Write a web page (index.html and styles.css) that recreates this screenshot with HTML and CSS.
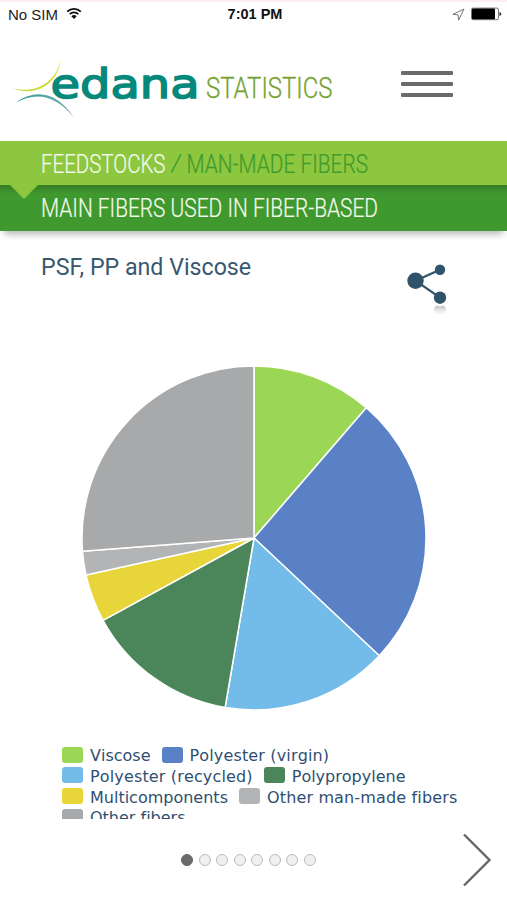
FILE: index.html
```html
<!DOCTYPE html>
<html lang="en">
<head>
    <meta charset="UTF-8">
    <meta name="viewport" content="width=device-width, initial-scale=1.0">
    <title>edana Statistics</title>
    <link rel="stylesheet" href="styles.css">
</head>
<body>

<div class="status-bar">
    <div class="carrier">
        <span>No SIM</span>
        <svg class="wifi" width="16" height="13" viewBox="0 0 16 13">
            <path d="M1.2 4.6a9.7 9.7 0 0 1 13.6 0M3.7 7.2a6.1 6.1 0 0 1 8.6 0" fill="none" stroke="#111" stroke-width="1.8"/>
            <path d="M8 12L5.3 9.2a3.9 3.9 0 0 1 5.4 0z" fill="#111"/>
        </svg>
    </div>
    <span class="time">7:01 PM</span>
    <div class="indicators">
        <svg width="13" height="13" viewBox="0 0 13 13">
            <path d="M12 1L.9 6.3l5.2.6.5 5.2z" fill="none" stroke="#777" stroke-width="1"/>
        </svg>
        <svg width="31" height="14" viewBox="0 0 31 14">
            <rect x=".5" y="1.1" width="27" height="11.6" rx="1.5" fill="#fff" stroke="#777"/>
            <rect x="1" y="1.6" width="23" height="10.6" rx="1" fill="#000"/>
            <path d="M28.5 5v4q1.8-.6 1.8-2t-1.8-2z" fill="#222"/>
        </svg>
    </div>
</div>

<header class="header">
    <svg class="logo" width="340" height="70" viewBox="0 0 340 70">
        <defs>
            <linearGradient id="yellow" x1="0" x2="1">
                <stop offset="0" stop-color="#c3d83a"/>
                <stop offset="1" stop-color="#d3df35"/>
            </linearGradient>
            <linearGradient id="teal" x1="0" x2="1">
                <stop offset="0" stop-color="#2d9b93"/>
                <stop offset="1" stop-color="#7db0b4"/>
            </linearGradient>
        </defs>
        <path d="M12 38.3C36 44 55 33 61 10C57 36 34 47 12 38.3z" fill="url(#yellow)"/>
        <path d="M16 52.5C37 37 59 44 73.5 67C56 46 37 41 16 52.5z" fill="url(#teal)"/>
        <text class="logo-name" x="50.5" y="47.5" textLength="149" lengthAdjust="spacingAndGlyphs">edana</text>
        <text class="logo-suffix" x="206" y="47.5" textLength="126.5" lengthAdjust="spacingAndGlyphs">STATISTICS</text>
    </svg>
    <div class="menu-button">
        <span></span>
        <span></span>
        <span></span>
    </div>
</header>

<nav class="breadcrumb">
    <svg width="507" height="44" viewBox="0 0 507 44">
        <text class="crumb" x="41" y="31.5" textLength="124.5" lengthAdjust="spacingAndGlyphs">FEEDSTOCKS</text>
        <path d="M171.5 31.5L181 13" stroke="#409a2d" stroke-width="1.5"/>
        <text class="crumb current" x="186.5" y="31.5" textLength="181.5" lengthAdjust="spacingAndGlyphs">MAN-MADE FIBERS</text>
    </svg>
</nav>
<div class="section-title">
    <svg width="507" height="45" viewBox="0 0 507 45">
        <text class="crumb" x="41" y="31.5" textLength="337" lengthAdjust="spacingAndGlyphs">MAIN FIBERS USED IN FIBER-BASED</text>
    </svg>
</div>

<main>
    <div class="chart-head">
        <h1>PSF, PP and Viscose</h1>
        <svg class="share" width="42" height="56" viewBox="0 0 42 56">
            <defs>
                <linearGradient id="fade" x1="0" y1="0" x2="0" y2="1">
                    <stop offset="0" stop-color="#999" stop-opacity=".65"/>
                    <stop offset="1" stop-color="#ccc" stop-opacity="0"/>
                </linearGradient>
            </defs>
            <path d="M34 9.7L9.5 20.7L34 37.7" fill="none" stroke="#31526b" stroke-width="2.2"/>
            <circle cx="9.5" cy="20.7" r="8.2" fill="#31526b"/>
            <circle cx="34" cy="9.7" r="5.2" fill="#31526b"/>
            <circle cx="34" cy="37.7" r="6.2" fill="#31526b"/>
            <path d="M27.8 50a6.2 5.5 0 0 1 2.5-4.5q3.7 1.5 7.4 0a6.2 5.5 0 0 1 2.5 4.5l-1.5 5h-9z" fill="url(#fade)"/>
        </svg>
    </div>

    <svg class="pie" width="346" height="346" viewBox="-173 -173 346 346">
        <path fill="#9bd755" d="M0 0L0 -172A172 172 0 0 1 112.3 -130.3z"/>
        <path fill="#5a81c6" d="M0 0L112.3 -130.3A172 172 0 0 1 125.3 117.8z"/>
        <path fill="#73bbe9" d="M0 0L125.3 117.8A172 172 0 0 1 -28.9 169.6z"/>
        <path fill="#4b865a" d="M0 0L-28.9 169.6A172 172 0 0 1 -151 82.3z"/>
        <path fill="#e8d53a" d="M0 0L-151 82.3A172 172 0 0 1 -168 37z"/>
        <path fill="#b2b4b6" d="M0 0L-168 37A172 172 0 0 1 -171.5 13.3z"/>
        <path fill="#a7a9ab" d="M0 0L-171.5 13.3A172 172 0 0 1 0 -172z"/>
    </svg>

    <div class="legend">
        <div class="legend-row">
            <span class="item"><i class="swatch viscose"></i>Viscose</span>
            <span class="item wide"><i class="swatch virgin"></i>Polyester (virgin)</span>
        </div>
        <div class="legend-row">
            <span class="item wide"><i class="swatch recycled"></i>Polyester (recycled)</span>
            <span class="item"><i class="swatch polypropylene"></i>Polypropylene</span>
        </div>
        <div class="legend-row">
            <span class="item"><i class="swatch multi"></i>Multicomponents</span>
            <span class="item wide"><i class="swatch man-made"></i>Other man-made fibers</span>
        </div>
        <div class="legend-row">
            <span class="item"><i class="swatch other"></i>Other fibers</span>
        </div>
    </div>
</main>

<footer class="pager">
    <div class="dots">
        <span class="dot active"></span>
        <span class="dot"></span>
        <span class="dot"></span>
        <span class="dot"></span>
        <span class="dot"></span>
        <span class="dot"></span>
        <span class="dot"></span>
        <span class="dot"></span>
    </div>
    <svg class="next" width="30" height="56" viewBox="0 0 30 56">
        <path d="M2 2.5L27.5 28L2 53.5" fill="none" stroke="#666" stroke-width="2.4"/>
    </svg>
</footer>

</body>
</html>
```

FILE: styles.css
```css
* {
    box-sizing: border-box;
}
body {
    margin: 0;
    height: 900px;
    overflow: hidden;
    background-color: #fff;
    font-family: Roboto, Arial, sans-serif;
}
svg {
    display: block;
}

/* status bar */
.status-bar {
    display: grid;
    grid-template-columns: 1fr auto 1fr;
    align-items: center;
    height: 28px;
    padding: 0 5px 2px 8px;
    border-top: 2px solid #fdeef0;
    font-family: "Liberation Sans", Arial, sans-serif;
    font-size: 15px;
    color: #222;
}
.carrier {
    display: flex;
    align-items: center;
    gap: 8px;
}
.wifi {
    margin-bottom: 1px;
}
.time {
    font-size: 14.5px;
    font-weight: bold;
    color: #111;
}
.indicators {
    display: flex;
    justify-content: flex-end;
    align-items: center;
    gap: 6px;
}

/* header */
.header {
    display: flex;
    height: 113px;
    padding-top: 22px;
}
.logo {
    overflow: visible;
}
.logo-name {
    font-family: "DejaVu Sans", sans-serif;
    font-size: 40px;
    fill: #06897b;
    stroke: #06897b;
    stroke-width: 1.5px;
}
.logo-suffix {
    font-family: Roboto, sans-serif;
    font-size: 29px;
    font-weight: 300;
    fill: #78a22f;
    stroke: #78a22f;
    stroke-width: 0.3px;
}
.menu-button {
    display: flex;
    flex-direction: column;
    gap: 7px;
    width: 52px;
    margin: 21px 0 0 61px;
}
.menu-button span {
    height: 4px;
    border-radius: 1px;
    background-color: #6b6b6b;
}

/* green bars */
.breadcrumb {
    position: relative;
    height: 44px;
    background-color: #8dc63f;
    z-index: 1;
}
.breadcrumb::after {
    content: "";
    position: absolute;
    top: 100%;
    left: 10px;
    border: 14px solid transparent;
    border-top-color: #8dc63f;
    border-bottom: 0;
}
.section-title {
    height: 46px;
    background: linear-gradient(#347d25, #40992f 9px);
    box-shadow: 0 7px 7px -4px rgba(0, 0, 0, 0.3);
}
.crumb {
    font-family: Roboto, sans-serif;
    font-size: 25px;
    font-weight: 300;
    fill: #f4faec;
    stroke: #f4faec;
    stroke-width: 0.2px;
}
.crumb.current {
    fill: #409a2d;
    stroke: #409a2d;
}

/* chart */
.chart-head {
    display: flex;
    justify-content: space-between;
    height: 134px;
    padding: 22px 59px 0 41px;
}
.chart-head h1 {
    margin: 0;
    font-size: 23.2px;
    font-weight: 400;
    line-height: 28px;
    color: #38586f;
}
.share {
    margin-top: 7px;
}
.pie {
    margin: 0 0 0 81px;
}
.pie path {
    stroke: #fff;
    stroke-width: 1.5px;
    stroke-linejoin: round;
}
.legend {
    height: 73px;
    margin: 35px 0 0 62px;
    overflow: hidden;
    font-family: "DejaVu Sans", Verdana, sans-serif;
    font-size: 16px;
    font-kerning: none;
    font-variant-ligatures: none;
    color: #2f4f72;
}
.legend-row {
    display: flex;
    gap: 11px;
    height: 20.8px;
}
.item {
    display: flex;
    gap: 7px;
    line-height: 20px;
    white-space: nowrap;
}
.item.wide {
    letter-spacing: 0.15px;
}
.swatch {
    width: 21px;
    height: 16px;
    margin-top: 0.5px;
    border-radius: 3px;
}
.viscose { background-color: #9bd755; }
.virgin { background-color: #5a81c6; }
.recycled { background-color: #73bbe9; }
.polypropylene { background-color: #4b865a; }
.multi { background-color: #e8d53a; }
.man-made { background-color: #b2b4b6; }
.other { background-color: #a7a9ab; }

/* pager */
.pager {
    display: flex;
    justify-content: space-between;
    align-items: center;
    height: 81px;
    padding: 0 15px 0 181px;
}
.dots {
    display: flex;
    gap: 5.5px;
}
.dot {
    width: 12px;
    height: 12px;
    border: 1px solid #bbb;
    border-radius: 50%;
    background-color: #f0f0f0;
}
.dot.active {
    border-color: #666;
    background-color: #6b6b6b;
}
```
